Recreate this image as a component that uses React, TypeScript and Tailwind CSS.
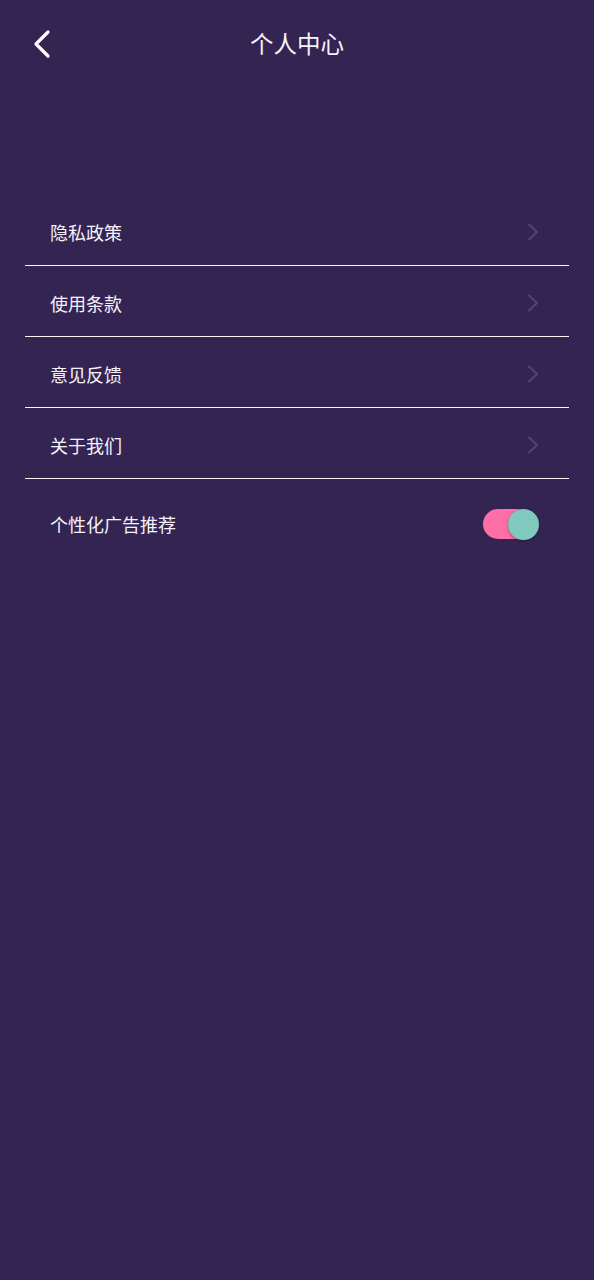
import { useState } from 'react';

const items = ['隐私政策', '使用条款', '意见反馈', '关于我们'];

function Chevron() {
  return (
    <svg width="12" height="18" viewBox="0 0 12 18" fill="none">
      <path d="M2 1.5L10 9L2 16.5" stroke="#524570" strokeWidth="2" strokeLinecap="round" strokeLinejoin="round" />
    </svg>
  );
}

export default function App() {
  const [adsOn, setAdsOn] = useState(true);

  return (
    <div
      className="w-full h-[1280px] bg-[#342452] text-[#f6f2fa]"
      style={{ fontFamily: '"Noto Sans CJK SC", "Noto Sans", sans-serif' }}
    >
      {/* header */}
      <div className="relative h-[88px] flex items-center justify-center">
        <button className="absolute left-[31px] top-[28px] p-0">
          <svg width="21" height="32" viewBox="0 0 21 32" fill="none">
            <path d="M17 4L5 16L17 28" stroke="#ffffff" strokeWidth="3.2" strokeLinecap="round" strokeLinejoin="round" />
          </svg>
        </button>
        <h1 className="text-[23.5px] leading-none">个人中心</h1>
      </div>

      <div className="px-[25px] pt-[106.5px]">
        {items.map((label) => (
          <div
            key={label}
            className="h-[71px] pt-[5.5px] flex items-center justify-between pl-[25px] pr-[30px] border-b-[1.5px] border-[#f8f4fa]"
          >
            <span className="text-[18px] leading-none">{label}</span>
            <Chevron />
          </div>
        ))}

        <div className="h-[91px] flex items-center justify-between pl-[25px] pr-[30px]">
          <span className="text-[18px] leading-none">个性化广告推荐</span>
          <button
            onClick={() => setAdsOn(!adsOn)}
            className="relative w-[56px] h-[31px] flex items-center"
          >
            <span className={`absolute left-0 w-[48px] h-[30px] rounded-full ${adsOn ? 'bg-[#ff6ea6]' : 'bg-[#5a4d75]'}`} />
            <span
              className={`absolute w-[31px] h-[31px] rounded-full bg-[#7fc9bf] shadow-[0_1px_3px_rgba(0,0,0,0.35)] ${adsOn ? 'left-[25px]' : 'left-0'}`}
            />
          </button>
        </div>
      </div>
    </div>
  );
}
